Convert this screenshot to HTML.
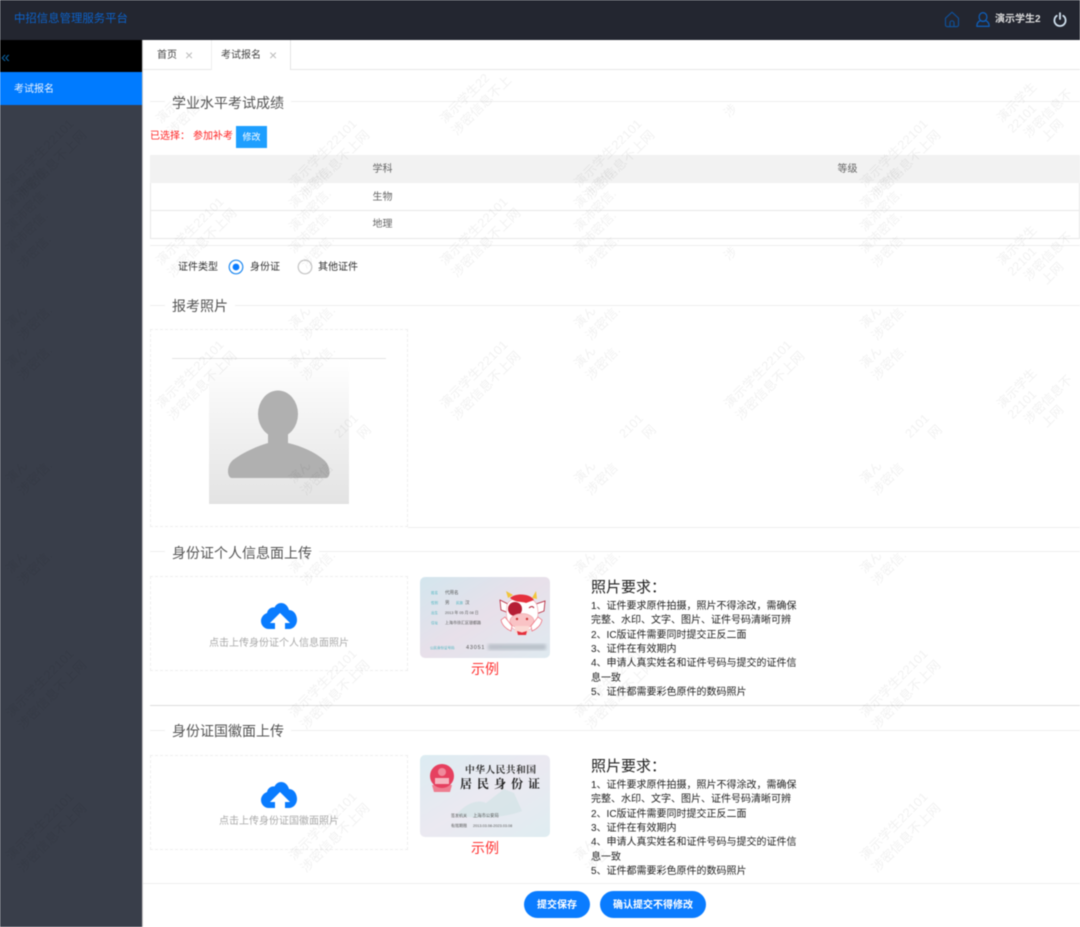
<!DOCTYPE html>
<html lang="zh"><head><meta charset="utf-8"><title>中招信息管理服务平台</title>
<style>
*{box-sizing:border-box;margin:0;padding:0}
html,body{width:1080px;height:927px;overflow:hidden;background:#fff}
body{font-family:"Liberation Sans","Noto Sans CJK SC",sans-serif;position:relative;color:#333}
#r{position:absolute;left:0;top:0;width:1080px;height:927px;filter:blur(.4px);overflow:hidden}
.a{position:absolute;white-space:nowrap}
.hl{position:absolute;height:1px;background:#eee}
.lg{position:absolute;left:165px;padding:0 7px;background:#fff;font-size:14px;line-height:20px;color:#555;white-space:nowrap}
.box{position:absolute;left:150px;width:258px;border:1px dashed #eee}
.up{position:absolute;left:150px;width:258px;text-align:center;font-size:10px;line-height:14px;color:#aaa}
.req{position:absolute;left:591px;width:210px;font-size:10px;line-height:14.33px;color:#222}
.req b{display:block;font-weight:400;font-size:15px;line-height:22px;margin-bottom:0;color:#222}
.ex{position:absolute;left:420px;width:130px;text-align:center;color:#f33;font-size:14px;line-height:20px}
.btn{position:absolute;top:891px;height:27px;border-radius:14px;background:#0a7cff;color:#fff;font-size:10px;line-height:29px;text-align:center;font-weight:700}
.w text{font-size:12.5px}
.w text.t{font-size:13px}
</style></head><body><div id="r">

<div class="a" style="left:0;top:0;width:1080px;height:40px;background:#232630"></div>
<div class="a" style="left:14px;top:11px;font-size:11.4px;line-height:17px;color:#0d62c9">中招信息管理服务平台</div>
<svg class="a" style="left:944px;top:11px" width="16" height="17" viewBox="0 0 16 17" fill="none" stroke="#0f4f96" stroke-width="1.2" stroke-linejoin="round"><path d="M1.5 7.2 8 1.2l6.5 6V14a1.6 1.6 0 0 1-1.6 1.6H3.100A1.6 1.6 0 0 1 1.5 14z"/><path d="M6 15.6v-3.800a2 2 0 0 1 4 0v3.800"/></svg>
<svg class="a" style="left:976px;top:12px" width="14" height="15" viewBox="0 0 14 15" fill="none" stroke="#0f5cb4" stroke-width="1.3"><ellipse cx="7" cy="5" rx="3.900" ry="4.300"/><path d="M.8 14.300c0-2.800 1.400-4.800 3.400-5.700 1.700 1 3.900 1 5.600 0 2 .9 3.400 2.900 3.400 5.700z" stroke-linejoin="round"/></svg>
<div class="a" style="left:995px;top:12px;font-size:10px;line-height:15px;color:#ddd;font-weight:700">演示学生2</div>
<svg class="a" style="left:1053px;top:12px" width="14" height="15" viewBox="0 0 14 15" fill="none" stroke="#cfe0ee" stroke-width="1.800" stroke-linecap="round"><path d="M7 1.200V7"/><path d="M3.800 3.800a5.600 5.600 0 1 0 6.400 0"/></svg>

<div class="a" style="left:0;top:40px;width:142px;height:32px;background:#000"></div>
<div class="a" style="left:1px;top:49px;font-size:16px;line-height:18px;color:#0b5f9e">«</div>
<div class="a" style="left:0;top:72px;width:142px;height:33px;background:#007bff"></div>
<div class="a" style="left:14px;top:82px;font-size:10px;line-height:15px;color:#e8f2ff">考试报名</div>
<div class="a" style="left:0;top:105px;width:142px;height:822px;background:#393e4a"></div>
<div class="a" style="left:142px;top:40px;width:1px;height:887px;background:#c8c8c8"></div>

<div class="hl" style="left:143px;top:69px;width:937px;background:#e8e8e8"></div>
<div class="a" style="left:157px;top:48px;font-size:10px;line-height:15px;color:#444">首页</div>
<div class="a" style="left:185px;top:47px;font-size:14px;line-height:16px;color:#bbb">×</div>
<div class="a" style="left:211px;top:40px;width:80px;height:30px;background:#fff;border-left:1px solid #eee;border-right:1px solid #e4e4e4"></div>
<div class="a" style="left:221px;top:48px;font-size:10px;line-height:15px;color:#444">考试报名</div>
<div class="a" style="left:269px;top:47px;font-size:14px;line-height:16px;color:#bbb">×</div>

<div class="hl" style="left:150px;top:101px;width:930px"></div>
<div class="lg" style="top:93px">学业水平考试成绩</div>
<div class="a" style="left:150px;top:129px;font-size:10px;line-height:15px;color:#f22">已选择：</div>
<div class="a" style="left:193px;top:129px;font-size:10px;line-height:15px;color:#f22">参加补考</div>
<div class="a" style="left:236px;top:126px;width:31px;height:22px;background:#1e9fff;color:#fff;font-size:9px;line-height:22px;text-align:center">修改</div>

<div class="a" style="left:150px;top:155px;width:930px;height:84px;border:1px solid #e8e8e8;border-top:0"></div>
<div class="a" style="left:150px;top:155px;width:930px;height:28px;background:#f2f2f2"></div>
<div class="hl" style="left:150px;top:210px;width:930px;background:#e8e8e8"></div>
<div class="a" style="left:150px;top:162px;width:465px;text-align:center;font-size:10px;line-height:15px;color:#666">学科</div>
<div class="a" style="left:615px;top:162px;width:465px;text-align:center;font-size:10px;line-height:15px;color:#666">等级</div>
<div class="a" style="left:150px;top:190px;width:465px;text-align:center;font-size:10px;line-height:15px;color:#666">生物</div>
<div class="a" style="left:150px;top:217px;width:465px;text-align:center;font-size:10px;line-height:15px;color:#666">地理</div>
<div class="hl" style="left:150px;top:245px;width:930px"></div>

<div class="a" style="left:178px;top:260px;font-size:10px;line-height:15px;color:#333">证件类型</div>
<svg class="a" style="left:228px;top:259px" width="16" height="16"><circle cx="8" cy="8" r="6.800" fill="#fff" stroke="#1e88f0" stroke-width="1.200"/><circle cx="8" cy="8" r="3.400" fill="#0a7cff"/></svg>
<div class="a" style="left:250px;top:260px;font-size:10px;line-height:15px;color:#333">身份证</div>
<svg class="a" style="left:297px;top:259px" width="16" height="16"><circle cx="8" cy="8" r="6.800" fill="#fff" stroke="#c4c4c4" stroke-width="1.200"/></svg>
<div class="a" style="left:318px;top:260px;font-size:10px;line-height:15px;color:#333">其他证件</div>

<div class="hl" style="left:150px;top:305px;width:930px"></div>
<div class="lg" style="top:296px">报考照片</div>
<div class="box" style="top:329px;height:198px"></div>
<div class="hl" style="left:408px;top:527px;width:672px"></div>
<div class="a" style="left:209px;top:360px;width:140px;height:144px;background:linear-gradient(#fff,#e3e3e3)"></div>
<div class="a" style="left:172px;top:358px;width:214px;height:1px;background:#e4e4e4"></div>
<svg class="a" style="left:225px;top:388px" width="106" height="92"><ellipse cx="53" cy="26" rx="20" ry="23.500" fill="#b0b0b0"/><path d="M43 40H63V55C76 58 90 64 99 72 106 78 106 90 101 90H7C2 90 1 78 8 72 17 65 30 59 43 55z" fill="#b0b0b0"/></svg>

<div class="hl" style="left:150px;top:551px;width:930px"></div>
<div class="lg" style="top:543px">身份证个人信息面上传</div>
<div class="box" style="top:576px;height:95px"></div>
<svg class="a" style="left:260px;top:603px" width="38" height="26" viewBox="0 0 38 26"><path d="M9 26C4 26 1 22 1 18c0-4 3-7 6-8C8 6 11 4 14.500 4.500 16 1.500 18.500 0 21 0c4 0 7 3 8 7 5 0 8 5 8 10 0 5-3.500 9-8 9z" fill="#0a7cff"/><path d="M20 10l10 10h-5v6H15v-6h-5z" fill="#fff"/></svg>
<div class="up" style="top:637px">点击上传身份证个人信息面照片</div>

<svg class="a" style="left:420px;top:577px" width="130" height="81" viewBox="0 0 130 81" font-family="'Liberation Sans','Noto Sans CJK SC',sans-serif">
<defs><linearGradient id="g1" x1="0" y1="0" x2="1" y2="1"><stop offset="0" stop-color="#d3e6ee"/><stop offset=".5" stop-color="#e8e0ea"/><stop offset="1" stop-color="#dfeaf0"/></linearGradient><filter id="bl"><feGaussianBlur stdDeviation="1.500"/></filter></defs>
<rect width="130" height="81" rx="5" fill="url(#g1)"/>
<g font-size="4.500" fill="#555"><text x="25" y="17">代用名</text><text x="25" y="27">男</text><text x="45" y="27">汉</text><text x="25" y="37" font-size="3.800">2013 年 05 月 08 日</text><text x="25" y="47" font-size="4">上海市徐汇区银都路</text><text x="46" y="72" letter-spacing=".8" font-size="5.500">43051</text></g>
<g font-size="3.500" fill="#4cb4bf"><text x="11" y="17">姓名</text><text x="11" y="27">性别</text><text x="36" y="27">民族</text><text x="11" y="37">出生</text><text x="11" y="47">住址</text><text x="10" y="72">公民身份证号码</text></g>
<rect x="68" y="67" width="58" height="6" fill="#a8b0ba" filter="url(#bl)" opacity=".7"/>
<path d="M88 21l-2-7 7 4zM112 21l4-7 1 8z" fill="#f2c53a"/>
<path d="M88 27l-8-4 1 10 8 3zM116 27l9-3-1 10-8 3z" fill="#fff" stroke="#b51e34" stroke-width=".8"/>
<path d="M87 28c3-9 25-12 30 0 2 8 1 14-2 19-3 5-6 7-13 7-7 0-11-3-13-7-3-5-3-12-2-19z" fill="#fff" stroke="#f3a0a8" stroke-width=".6"/>
<path d="M90 21c5-5 20-5 24 2l-8 3c-5-2-10 0-16-5z" fill="#e5303c"/>
<circle cx="95" cy="32" r="7" fill="#b51e34"/>
<path d="M109 31q3-3 5 0" fill="none" stroke="#b51e34"/>
<ellipse cx="102" cy="44" rx="12" ry="7.500" fill="#f9c3c5" stroke="#ee9aa0" stroke-width=".6"/>
<circle cx="97" cy="42" r="1.200" fill="#c33"/><circle cx="107" cy="42" r="1.200" fill="#c33"/>
<path d="M95 49h14v7H95z" fill="#fbd9d4"/>
<path d="M91 54c-5-2-9-6-10-11l4-3 7 9zM112 54c5-2 9-6 10-11l-4-3-7 9z" fill="#fff" stroke="#ee6a78" stroke-width=".7"/>
<path d="M97 54l5 1.500 5-1.500-1 4h-8z" fill="#e5303c"/>
</svg>
<div class="ex" style="top:659px">示例</div>
<div class="req" style="top:577px"><b style="margin-bottom:1px">照片要求：</b>1、证件要求原件拍摄，照片不得涂改，需确保完整、水印、文字、图片、证件号码清晰可辨<br>2、IC版证件需要同时提交正反二面<br>3、证件在有效期内<br>4、申请人真实姓名和证件号码与提交的证件信息一致<br>5、证件都需要彩色原件的数码照片</div>

<div class="hl" style="left:150px;top:705px;width:930px;background:#ddd"></div>
<div class="hl" style="left:150px;top:730px;width:930px"></div>
<div class="lg" style="top:721px">身份证国徽面上传</div>
<div class="box" style="top:755px;height:95px"></div>
<svg class="a" style="left:260px;top:782px" width="38" height="26" viewBox="0 0 38 26"><path d="M9 26C4 26 1 22 1 18c0-4 3-7 6-8C8 6 11 4 14.500 4.500 16 1.500 18.500 0 21 0c4 0 7 3 8 7 5 0 8 5 8 10 0 5-3.500 9-8 9z" fill="#0a7cff"/><path d="M20 10l10 10h-5v6H15v-6h-5z" fill="#fff"/></svg>
<div class="up" style="top:815px">点击上传身份证国徽面照片</div>

<svg class="a" style="left:420px;top:755px" width="130" height="82" viewBox="0 0 130 82" font-family="'Liberation Serif','Noto Serif CJK SC',serif">
<defs><linearGradient id="g2" x1="0" y1="0" x2="1" y2="1"><stop offset="0" stop-color="#dcecf2"/><stop offset=".5" stop-color="#ebe9f1"/><stop offset="1" stop-color="#dfedf1"/></linearGradient></defs>
<rect width="130" height="82" rx="5" fill="url(#g2)"/>
<path d="M36 60c10-12 22-16 30-12l18-14 10 4 8 18c-20 8-50 8-66 4z" fill="#d5e3e7" opacity=".8"/>
<path d="M12 30h20l-2 7H14z" fill="#ee7d90"/><circle cx="22" cy="21" r="12" fill="#e6405f"/><circle cx="22" cy="17" r="4" fill="#f08a9c"/><rect x="15" y="23" width="14" height="6" fill="#f5b6c0"/>
<text x="45" y="18" font-size="9.800" font-weight="700" fill="#333" textLength="71">中华人民共和国</text>
<text x="40" y="33" font-size="12" font-weight="700" fill="#222" textLength="80">居民身份证</text>
<g font-family="'Liberation Sans','Noto Sans CJK SC',sans-serif" fill="#555"><text x="31" y="62" font-size="4">签发机关</text><text x="53" y="62" font-size="4.300">上海市公安局</text><text x="31" y="72" font-size="4">有效期限</text><text x="53" y="72" font-size="3.800">2013.03.08-2023.03.08</text></g>
</svg>
<div class="ex" style="top:838px">示例</div>
<div class="req" style="top:756px"><b style="margin-bottom:1px">照片要求：</b>1、证件要求原件拍摄，照片不得涂改，需确保完整、水印、文字、图片、证件号码清晰可辨<br>2、IC版证件需要同时提交正反二面<br>3、证件在有效期内<br>4、申请人真实姓名和证件号码与提交的证件信息一致<br>5、证件都需要彩色原件的数码照片</div>

<div class="hl" style="left:143px;top:883px;width:937px"></div>
<div class="btn" style="left:524px;width:66px">提交保存</div>
<div class="btn" style="left:600px;width:106px">确认提交不得修改</div>

<svg class="a w" style="left:0;top:0;pointer-events:none" width="1080" height="927" fill="#000" fill-opacity=".06" font-family="'Liberation Sans','Noto Sans CJK SC',sans-serif"><g transform="translate(4,1)">
<g transform="translate(157,123) rotate(-45)"><text>演示学</text><text class="t" y="17">涉密信息</text></g>
<g transform="translate(441,123) rotate(-45)"><text>演示学生22</text><text class="t" y="17">涉密信息不上</text></g>
<g transform="translate(725,117) rotate(-45)"><text>涉</text></g>
<g transform="translate(725,260) rotate(-45)"><text>涉</text></g>
<g transform="translate(157,265) rotate(-45)"><text textLength="90" lengthAdjust="spacingAndGlyphs">演示学生22101</text><text class="t" y="17">涉密信息不上网</text></g>
<g transform="translate(441,265) rotate(-45)"><text textLength="90" lengthAdjust="spacingAndGlyphs">演示学生22101</text><text class="t" y="17">涉密信息不上网</text></g>
<g transform="translate(157,408) rotate(-45)"><text textLength="90" lengthAdjust="spacingAndGlyphs">演示学生22101</text><text class="t" y="17">涉密信息不上网</text></g>
<g transform="translate(441,408) rotate(-45)"><text textLength="90" lengthAdjust="spacingAndGlyphs">演示学生22101</text><text class="t" y="17">涉密信息不上网</text></g>
<g transform="translate(725,408) rotate(-45)"><text textLength="90" lengthAdjust="spacingAndGlyphs">演示学生22101</text><text class="t" y="17">涉密信息不上网</text></g>

<g transform="translate(7,0)"><g transform="translate(0,187) rotate(-45)"><text textLength="90" lengthAdjust="spacingAndGlyphs">演示学生22101</text><text class="t" y="17">涉密信息不上网</text></g><g transform="translate(0,208) rotate(-45)"><text>演沛密信.</text></g><g transform="translate(0,231) rotate(-45)"><text>演沛密信.</text></g><g transform="translate(12,268) rotate(-45)"><text>涉密信.</text></g><g transform="translate(0,253) rotate(-45)"><text>演沛密信.</text></g><g transform="translate(0,328) rotate(-45)"><text>演ん</text><text class="t" y="17">涉密信.</text></g><g transform="translate(0,368) rotate(-45)"><text>演ん</text><text class="t" y="17">涉密信.</text></g><g transform="translate(0,483) rotate(-45)"><text>演ん</text><text class="t" y="17">涉密信.</text></g><g transform="translate(0,573) rotate(-45)"><text>演ん</text><text class="t" y="17">涉密信.</text></g><g transform="translate(0,717) rotate(-45)"><text textLength="90" lengthAdjust="spacingAndGlyphs">演示学生22101</text><text class="t" y="17">涉密信息不上网</text></g><g transform="translate(0,860) rotate(-45)"><text textLength="90" lengthAdjust="spacingAndGlyphs">演示学生22101</text><text class="t" y="17">涉密信息不上网</text></g></g>

<g transform="translate(290,0)"><g transform="translate(0,187) rotate(-45)"><text textLength="90" lengthAdjust="spacingAndGlyphs">演示学生22101</text><text class="t" y="17">涉密信息不上网</text></g><g transform="translate(0,208) rotate(-45)"><text>演沛密信.</text></g><g transform="translate(0,231) rotate(-45)"><text>演沛密信.</text></g><g transform="translate(0,253) rotate(-45)"><text>演沛密信.</text></g><g transform="translate(12,268) rotate(-45)"><text>涉密信.</text></g><g transform="translate(0,328) rotate(-45)"><text>演ん</text><text class="t" y="17">涉密信.</text></g><g transform="translate(0,368) rotate(-45)"><text>演ん</text><text class="t" y="17">涉密信.</text></g><g transform="translate(0,483) rotate(-45)"><text>演ん</text><text x="64">2101</text><text class="t" y="17">涉密信</text><text class="t" x="80" y="17">网</text></g><g transform="translate(0,573) rotate(-45)"><text>演ん</text><text class="t" y="17">涉密信.</text></g><g transform="translate(0,717) rotate(-45)"><text textLength="90" lengthAdjust="spacingAndGlyphs">演示学生22101</text><text class="t" y="17">涉密信息不上网</text></g><g transform="translate(0,860) rotate(-45)"><text textLength="90" lengthAdjust="spacingAndGlyphs">演示学生22101</text><text class="t" y="17">涉密信息不上网</text></g></g>

<g transform="translate(575,0)"><g transform="translate(0,187) rotate(-45)"><text textLength="90" lengthAdjust="spacingAndGlyphs">演示学生22101</text><text class="t" y="17">涉密信息不上网</text></g><g transform="translate(0,208) rotate(-45)"><text>演沛密信.</text></g><g transform="translate(0,231) rotate(-45)"><text>演沛密信.</text></g><g transform="translate(0,253) rotate(-45)"><text>演沛密信.</text></g><g transform="translate(12,268) rotate(-45)"><text>涉密信.</text></g><g transform="translate(0,328) rotate(-45)"><text>演ん</text><text class="t" y="17">涉密信.</text></g><g transform="translate(0,368) rotate(-45)"><text>演ん</text><text class="t" y="17">涉密信.</text></g><g transform="translate(0,483) rotate(-45)"><text>演ん</text><text x="64">2101</text><text class="t" y="17">涉密信</text><text class="t" x="80" y="17">网</text></g><g transform="translate(0,573) rotate(-45)"><text>演ん</text><text class="t" y="17">涉密信.</text></g><g transform="translate(0,717) rotate(-45)"><text textLength="90" lengthAdjust="spacingAndGlyphs">演示学生22101</text><text class="t" y="17">涉密信息不上网</text></g><g transform="translate(0,860) rotate(-45)"><text>演ん</text><text class="t" y="17">涉密</text></g></g>

<g transform="translate(861,0)"><g transform="translate(0,187) rotate(-45)"><text textLength="90" lengthAdjust="spacingAndGlyphs">演示学生22101</text><text class="t" y="17">涉密信息不上网</text></g><g transform="translate(0,208) rotate(-45)"><text>演沛密信.</text></g><g transform="translate(0,231) rotate(-45)"><text>演沛密信.</text></g><g transform="translate(0,253) rotate(-45)"><text>演沛密信.</text></g><g transform="translate(12,267) rotate(-45)"><text>涉密信.</text></g><g transform="translate(0,328) rotate(-45)"><text>演ん</text><text class="t" y="17">涉密信.</text></g><g transform="translate(0,368) rotate(-45)"><text>演ん</text><text class="t" y="17">涉密信.</text></g><g transform="translate(0,483) rotate(-45)"><text>演ん</text><text x="64">2101</text><text class="t" y="17">涉密信</text><text class="t" x="80" y="17">网</text></g><g transform="translate(0,573) rotate(-45)"><text>演ん</text><text class="t" y="17">涉密信.</text></g><g transform="translate(0,717) rotate(-45)"><text textLength="90" lengthAdjust="spacingAndGlyphs">演示学生22101</text><text class="t" y="17">涉密信息不上网</text></g><g transform="translate(0,860) rotate(-45)"><text textLength="90" lengthAdjust="spacingAndGlyphs">演示学生22101</text><text class="t" y="17">涉密信息不上网</text></g></g>

<g transform="translate(998,122) rotate(-45)"><text>演示学生</text><text y="15">22101</text><text x="8" y="30">涉密信息不</text><text x="18" y="45">上网</text></g>
<g transform="translate(998,265) rotate(-45)"><text>演示学生</text><text y="15">22101</text><text x="8" y="30">涉密信息不</text><text x="18" y="45">上网</text></g>
<g transform="translate(998,408) rotate(-45)"><text>演示学生</text><text y="15">22101</text><text x="8" y="30">涉密信息不</text><text x="18" y="45">上网</text></g>
</g></svg>
</div></body></html>
